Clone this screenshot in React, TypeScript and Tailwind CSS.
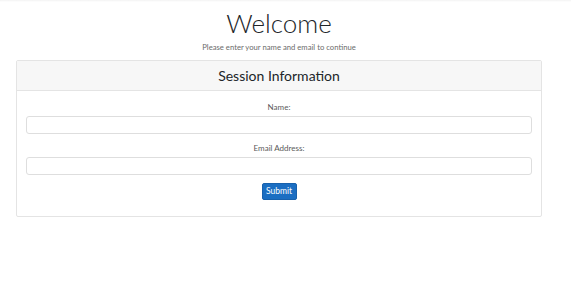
import React, { useState } from 'react';

const App: React.FC = () => {
  const [name, setName] = useState('');
  const [email, setEmail] = useState('');
  const handleSubmit = (e: React.FormEvent) => {
    e.preventDefault();
  };
  return <div className="w-[571px] h-[289px] bg-white font-['Lato',sans-serif] overflow-hidden">
      <div className="h-[2px] bg-gradient-to-b from-[#f3f3f3] to-white"></div>
      <div className="w-[558px]">
        <div className="text-center mt-[4px]">
          <h1 className="text-[26px] leading-[34px] font-light text-[#212529]">Welcome</h1>
          <p className="text-[7.7px] leading-[12px] mt-[1px] text-[#6c6c6c]">
            Please enter your name and email to continue
          </p>
        </div>
        <div className="mx-[16px] mt-[7px] border border-[#e4e4e4] rounded-[2px]">
          <div className="h-[30px] bg-[#f7f7f7] border-b border-[#e4e4e4] flex items-center justify-center">
            <h2 className="text-[14px] leading-[20px] text-[#212529]">Session Information</h2>
          </div>
          <form onSubmit={handleSubmit} className="px-[9px] pt-[10px] pb-[16px] flex flex-col items-center">
            <label htmlFor="name" className="text-[8px] leading-[12px] text-[#5a5a5a]">Name:</label>
            <input id="name" type="text" value={name} onChange={e => setName(e.target.value)} className="mt-[3px] w-full h-[18px] border border-[#dedede] rounded-[3px] px-2 text-[8px] outline-none" />
            <label htmlFor="email" className="mt-[8px] text-[8px] leading-[12px] text-[#5a5a5a]">Email Address:</label>
            <input id="email" type="email" value={email} onChange={e => setEmail(e.target.value)} className="mt-[3px] w-full h-[18px] border border-[#dedede] rounded-[3px] px-2 text-[8px] outline-none" />
            <button type="submit" className="mt-[8px] w-[35px] h-[17px] bg-[#1b6ec2] border border-[#1861ac] rounded-[2px] text-white text-[8.5px] leading-none">
              Submit
            </button>
          </form>
        </div>
      </div>
    </div>;
};

export default App;
